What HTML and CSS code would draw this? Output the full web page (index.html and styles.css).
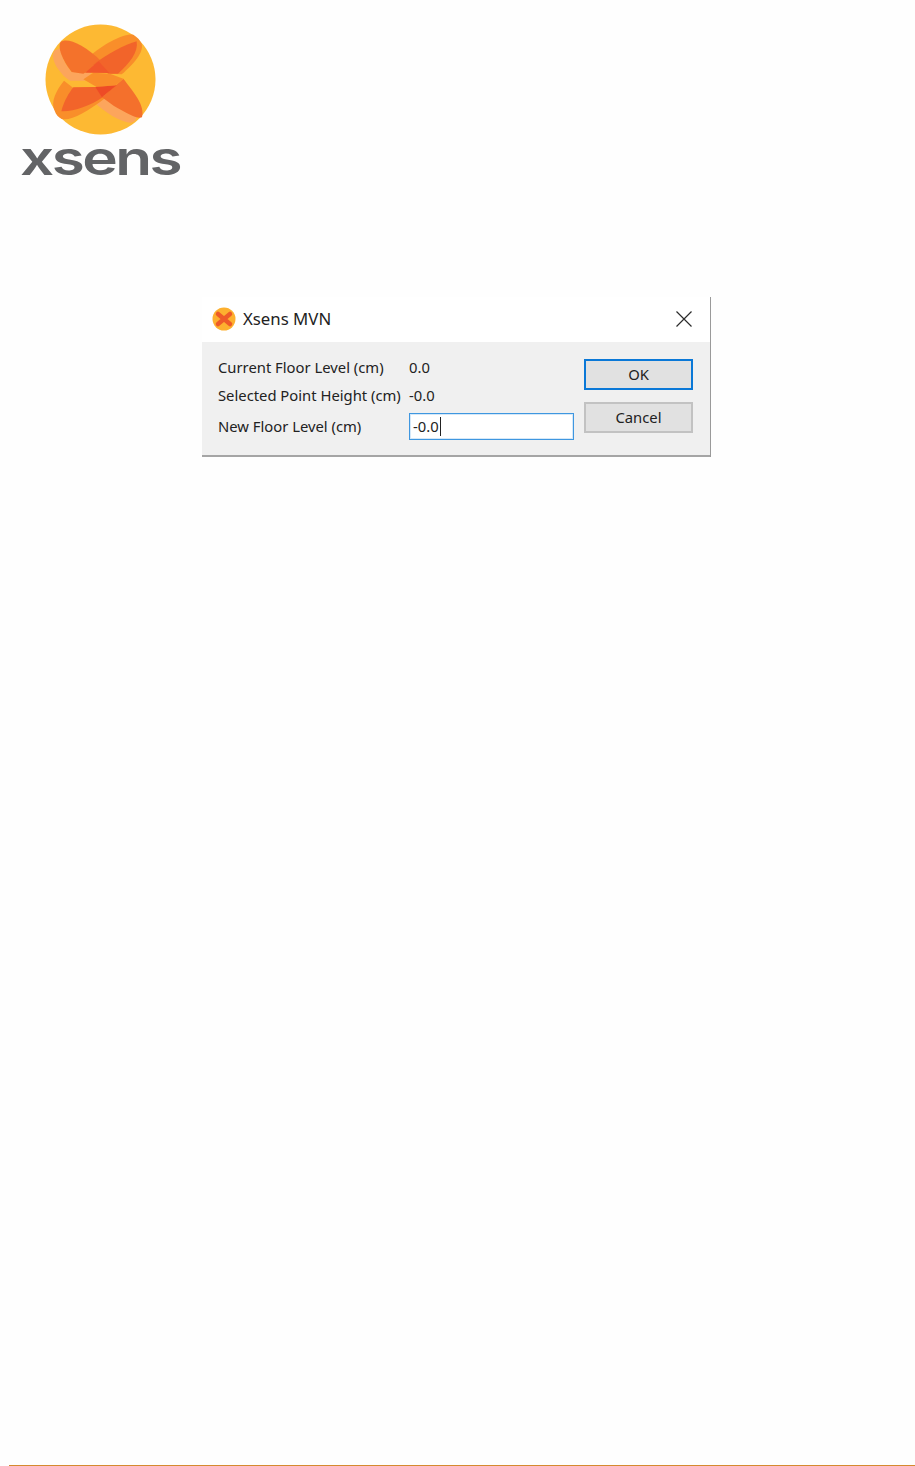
FILE: index.html
```html
<!doctype html>
<html>
<head>
    <meta charset="UTF-8">
    <title>Xsens MVN</title>
    <link rel="stylesheet" href="styles.css">
</head>
<body>
<div class="page">
    <svg class="logo" viewBox="0 0 200 190" width="200" height="190">
        <circle cx="100.5" cy="79.5" r="55" fill="#fdb933"/>
        <g transform="translate(40 22) scale(0.3333)">
            <!-- pale petals -->
            <path d="M45 85 C33 95 40 122 55 142 C65 156 75 168 90 176 L135 176 L155 152 L95 150 C78 130 62 100 62 78 Z" fill="#fca55c"/>
            <path d="M160 238 C195 272 240 300 270 302 C284 302 292 292 288 280 L200 215 Z" fill="#fca55c"/>
            <!-- medium petals -->
            <path d="M280 38 C250 34 190 66 145 106 L205 155 L245 157 C282 125 312 90 305 65 C300 55 292 45 280 38 Z" fill="#f98e2a"/>
            <path d="M62 60 C80 46 130 64 186 120 L130 155 L95 150 C75 125 50 80 62 60 Z" fill="#f4722b"/>
            <path d="M72 176 C48 205 32 240 43 264 C48 278 55 286 65 291 C92 298 138 272 196 228 L165 195 L100 198 Z" fill="#f98e2a"/>
            <!-- dark insides -->
            <path d="M290 58 C255 68 200 96 160 128 L205 155 L234 155 C268 125 296 90 290 58 Z" fill="#f2642a"/>
            <path d="M64 268 C72 236 88 212 100 196 L165 195 L188 226 C150 252 100 270 64 268 Z" fill="#f2642a"/>
            <path d="M228 190 L250 170 C282 212 316 250 306 286 C290 292 258 272 222 252 L186 226 Z" fill="#f4702c"/>
            <!-- middle band and the overlaps next to it -->
            <path d="M160 152 L210 155 L250 170 L228 190 L170 195 L130 172 Z" fill="#f98e2a"/>
            <path d="M176 118 L208 153 L135 152 Z" fill="#f1572a"/>
            <path d="M165 195 L230 190 L186 226 Z" fill="#ee4b26"/>
        </g>
        <text class="wordmark" x="20" y="175" textLength="160" lengthAdjust="spacingAndGlyphs">xsens</text>
    </svg>

    <div class="dialog">
        <div class="title-bar">
            <svg class="app-icon" viewBox="0 0 24 24" width="24" height="24">
                <circle cx="12" cy="12" r="11.5" fill="#fdb02f"/>
                <path d="M6 7 L18 17 M18 7 L6 17" stroke="#ee5a28" stroke-width="4.5" stroke-linecap="round" fill="none"/>
            </svg>
            <span class="title">Xsens MVN</span>
            <svg class="close" viewBox="0 0 16 16" width="16" height="16">
                <path d="M0.5 0.5 L15.5 15.5 M15.5 0.5 L0.5 15.5" stroke="#2b2b2b" stroke-width="1.2" fill="none"/>
            </svg>
        </div>
        <div class="dialog-body">
            <div class="form">
                <div class="row">Current Floor Level (cm)</div>
                <div class="row">0.0</div>
                <div class="row">Selected Point Height (cm)</div>
                <div class="row">-0.0</div>
                <div class="row row-input">New Floor Level (cm)</div>
                <div class="field"><span class="field-text">-0.0</span></div>
            </div>
            <div class="buttons">
                <div class="btn btn-default">OK</div>
                <div class="btn">Cancel</div>
            </div>
        </div>
    </div>

    <div class="footer-line"></div>
</div>
</body>
</html>
```
FILE: styles.css
```css
* {
    margin: 0;
    padding: 0;
    box-sizing: border-box;
}
body {
    background: #fefefe;
    font-family: "Noto Sans", "Open Sans", sans-serif;
    color: #222;
}
.page {
    display: flex;
    flex-direction: column;
    height: 1466px;
}
.logo {
    display: block;
}
.wordmark {
    font-family: Inter, sans-serif;
    font-weight: 600;
    font-size: 47px;
    letter-spacing: -2px;
    fill: #636466;
}
/* dialog */
.dialog {
    width: 509px;
    margin: 107px 0 0 202px;
    background: #fff;
    border-right: 1px solid #9a9a9a;
}
.title-bar {
    display: flex;
    align-items: center;
    height: 45px;
    padding: 0 18px 2px 10px;
}
.title {
    margin-left: 7px;
    font-size: 16.8px;
    flex: 1;
}
.dialog-body {
    display: flex;
    height: 115px;
    padding: 11px 18px 0 16px;
    background: #f0f0f0;
    border-bottom: 2px solid #a5a5a5;
}
.form {
    display: grid;
    grid-template-columns: 191px 165px;
    grid-template-rows: 28px 28px 32px;
    font-size: 14.8px;
    align-items: center;
}
.row-input {
    padding-top: 2px;
}
.field {
    height: 27px;
    margin-top: 3px;
    padding-left: 3px;
    background: #fff;
    border: 1px solid #3f97e0;
    box-shadow: inset 0 0 0 1px #d5e8f8;
    display: flex;
    align-items: center;
}
.field-text {
    padding-right: 1px;
    border-right: 1px solid #222;
    line-height: 19px;
}
.buttons {
    display: flex;
    flex-direction: column;
    gap: 12px;
    margin: 6px 0 0 10px;
}
.btn {
    width: 109px;
    height: 31px;
    padding-bottom: 2px;
    display: flex;
    align-items: center;
    justify-content: center;
    font-size: 14.8px;
    background: #e1e1e1;
    border: 2px solid #c2c2c2;
}
.btn-default {
    border-color: #0a78d7;
}
.footer-line {
    height: 1px;
    margin: auto 0 0 9px;
    background: #d58a2e;
}
```
